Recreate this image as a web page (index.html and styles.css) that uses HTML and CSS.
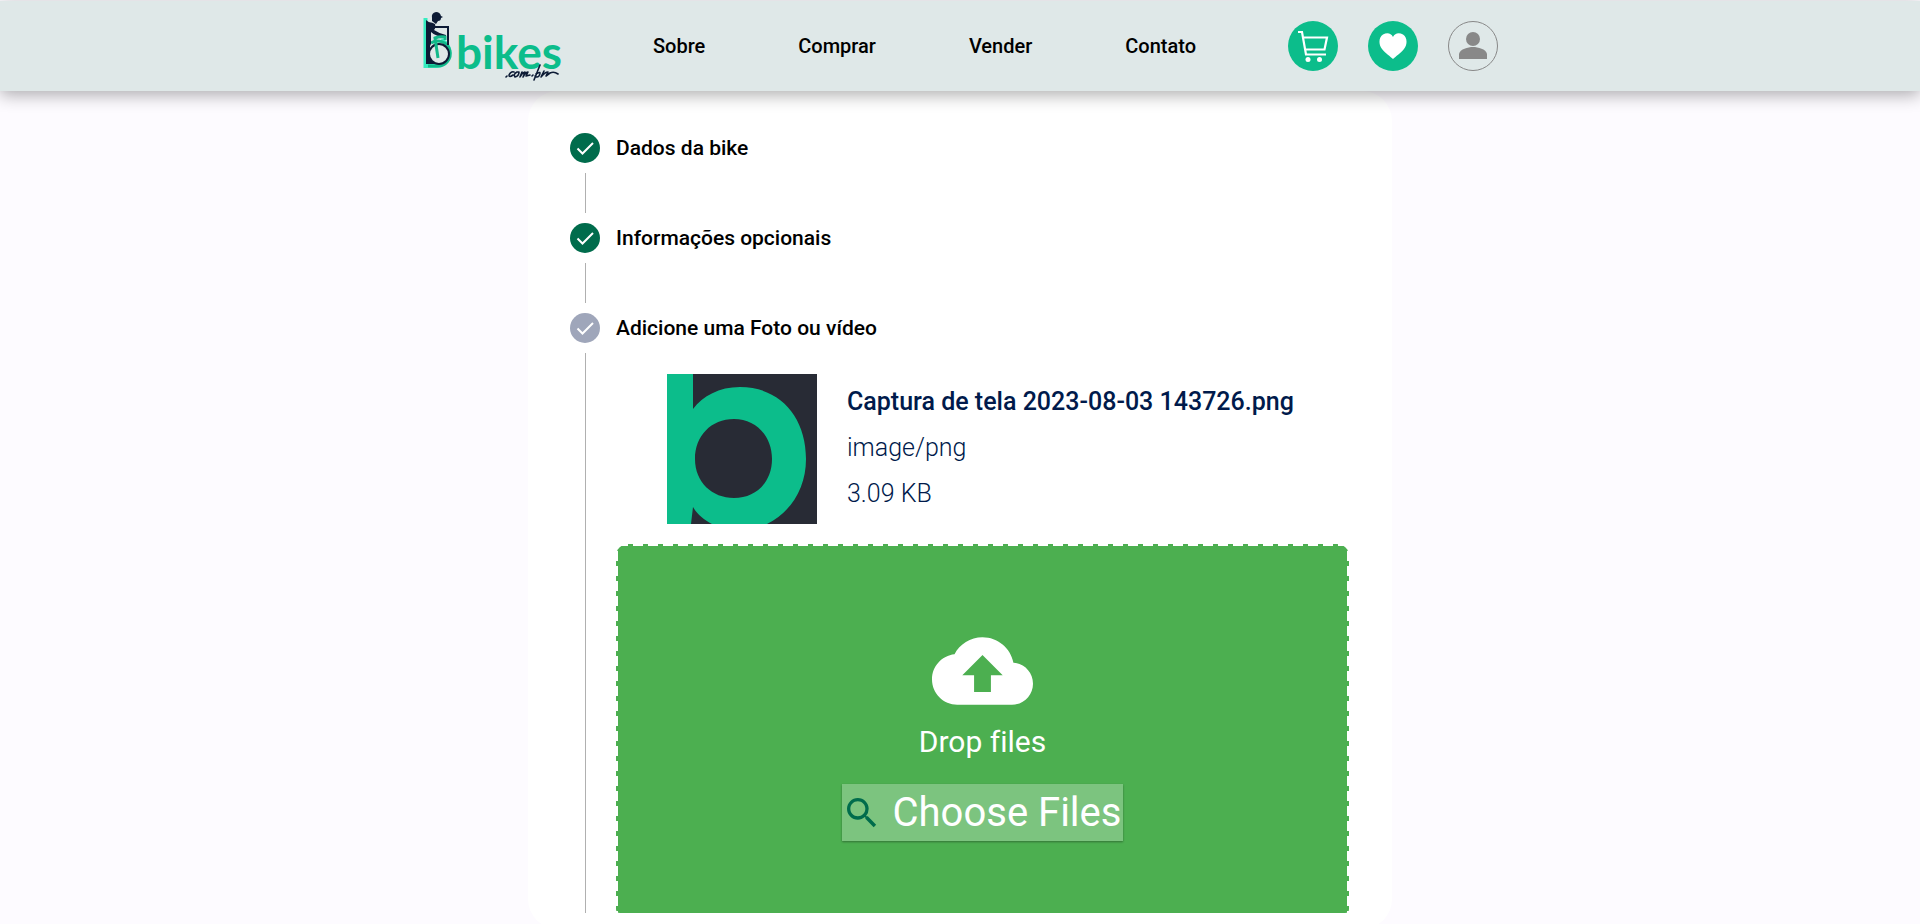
FILE: index.html
```html
<!DOCTYPE html>
<html lang="pt-BR">
<head>
<meta charset="utf-8">
<title>bbikes.com.br</title>
<link rel="stylesheet" href="styles.css">
</head>
<body>
<header class="topbar">
  <a class="logo" href="#" aria-label="bbikes.com.br">
    <svg class="logo-mark" viewBox="0 0 32 62" width="32" height="62" aria-hidden="true">
      <path d="M3.500 6V54H14A13.500 13.500 0 0 0 19 28" fill="none" stroke="#35edc0" stroke-width="4"/>
      <path d="M4 8L8 11V52H4Z" fill="#0d1b35"/>
      <path d="M6 54H15A12.500 12.500 0 1 0 9 31" fill="none" stroke="#12b98a" stroke-width="3"/>
      <path d="M5 38V52H16Z" fill="#0d1b35"/>
      <circle cx="17" cy="42" r="10" fill="#dfe8e8" stroke="#0d1b35" stroke-width="2"/>
      <path d="M9 15H26V33" fill="none" stroke="#0d1b35" stroke-width="2"/>
      <path d="M5 11Q8 9 13 12Q14 16 12 18Q18 22 24 23V25Q14 25 9 20V32L5 40Z" fill="#0d1b35"/>
      <path d="M10 6Q9 1 14 0Q18 0 19 4L21 5L19 6Q19 9 16 9L14 12L10 9Z" fill="#0d1b35"/>
      <path d="M16 46L13 26Q18 24 23 25V28" fill="none" stroke="#12b98a" stroke-width="3"/>
    </svg>
    <span class="logo-text">bikes<svg class="logo-sub" viewBox="0 0 56 18" width="56" height="18" aria-hidden="true"><path d="M2 13L3 12M10 8Q7 7 5 11Q5 14 9 11M13 8Q9 10 11 13Q15 12 15 8L13 8M18 8L16 13Q18 9 21 8L19 13Q22 8 24 8L22 12L26 11M28 12L29 11M36 1L30 16M32 10Q38 6 35 12Q33 14 31 12M40 7L37 13Q41 8 44 8L42 12L46 9Q50 7 54 10" fill="none" stroke="#0d1b35" stroke-width="1.600" stroke-linecap="round" stroke-linejoin="round"/></svg></span>
  </a>
  <nav class="nav">
    <a href="#">Sobre</a>
    <a href="#">Comprar</a>
    <a href="#">Vender</a>
    <a href="#">Contato</a>
  </nav>
  <div class="actions">
    <button class="round" type="button" aria-label="Carrinho">
      <svg viewBox="0 0 32 32" width="32" height="32"><path d="M1 2H5L9 24.500H29M7 7.500H30L27.500 19.500H8.500" fill="none" stroke="#fff" stroke-width="2.200"/><circle cx="11" cy="29.500" r="2.500" fill="#fff"/><circle cx="22.500" cy="29.500" r="2.500" fill="#fff"/></svg>
    </button>
    <button class="round" type="button" aria-label="Favoritos">
      <svg viewBox="0 0 28 26" width="28" height="26"><path d="M14 26C11 23 7 21 3 16C-1 11 0 4 4 1.500C8 -.5 12 0 14 4C16 0 20 -.5 24 1.500C28 4 29 11 25 16C21 21 17 23 14 26Z" fill="#fff"/></svg>
    </button>
    <button class="round user" type="button" aria-label="Conta">
      <svg viewBox="0 0 28 28" width="28" height="28"><circle cx="14" cy="7" r="7" fill="#888"/><path d="M0 27V22C1 17 9 15 14 15S27 17 28 22V27Z" fill="#888"/></svg>
    </button>
  </div>
</header>
<main class="card">
  <ol class="steps">
    <li class="step">
      <svg class="badge" viewBox="0 0 30 30" aria-hidden="true"><circle cx="15" cy="15" r="15"/><path d="M7.500 15.500L12.500 20.500L23 10"/></svg>
      <h2>Dados da bike</h2>
      <span class="line"></span>
    </li>
    <li class="step">
      <svg class="badge" viewBox="0 0 30 30" aria-hidden="true"><circle cx="15" cy="15" r="15"/><path d="M7.500 15.500L12.500 20.500L23 10"/></svg>
      <h2>Informações opcionais</h2>
      <span class="line"></span>
    </li>
    <li class="step current">
      <svg class="badge" viewBox="0 0 30 30" aria-hidden="true"><circle cx="15" cy="15" r="15"/><path d="M7.500 15.500L12.500 20.500L23 10"/></svg>
      <h2>Adicione uma Foto ou vídeo</h2>
      <span class="line"></span>
      <div class="content">
        <div class="file">
          <svg class="thumb" viewBox="0 0 150 150" role="img" aria-label="Pré-visualização"><path fill="#282b35" d="M0 0H150V150H0Z"/><path fill="#0cbd8b" fill-rule="evenodd" d="M0 0H26V35C36 22 52 13 73 13C113 13 139 43 139 85C139 114 124 138 100 150H45C37 146 30 140 26 133L24 150H0ZM67 45C44 45 28 62 28 85C28 108 45 124 67 124C89 124 105 108 105 85C105 62 89 45 67 45Z"/></svg>
          <div class="info">
            <p class="name">Captura de tela 2023-08-03 143726.png</p>
            <p>image/png</p>
            <p>3.09 KB</p>
          </div>
        </div>
        <div class="drop">
          <svg viewBox="0 4 24 16" width="101" height="68" aria-hidden="true"><path fill="#fff" d="M19.350 10.040C18.670 6.590 15.640 4 12 4 9.110 4 6.600 5.640 5.350 8.040 2.340 8.360 0 10.910 0 14c0 3.310 2.690 6 6 6h13c2.760 0 5-2.240 5-5 0-2.640-2.050-4.780-4.650-4.960zM14 13v4h-4v-4H7.200L12 8.200 16.800 13z"/></svg>
          <span class="hint">Drop files</span>
          <button class="choose" type="button">
            <svg viewBox="3 3 18 18" width="30" height="30" aria-hidden="true"><path fill="#006c4c" d="M15.500 14h-.79l-.28-.27A6.471 6.471 0 0 0 16 9.500 6.500 6.500 0 1 0 9.500 16c1.610 0 3.090-.59 4.230-1.570l.27.28v.79l5 4.990L20.490 19l-4.990-5zm-6 0C7.010 14 5 11.990 5 9.500S7.010 5 9.500 5 14 7.010 14 9.500 11.990 14 9.500 14z"/></svg>
            Choose Files
          </button>
        </div>
      </div>
    </li>
  </ol>
</main>
</body>
</html>
```
FILE: styles.css
```css
* { box-sizing: border-box; }
body {
  margin: 0;
  min-height: 100vh;
  display: flex;
  flex-direction: column;
  overflow: hidden;
  background: #fdfbff;
  color: #000;
  font-family: Roboto, sans-serif;
}
h2, p, ol { margin: 0; padding: 0; }
button { font: inherit; border: 0; padding: 0; cursor: pointer; }

.topbar {
  position: relative;
  z-index: 1;
  display: flex;
  align-items: center;
  justify-content: center;
  height: 90px;
  margin-top: 1px;
  background: #dfe8e8;
  box-shadow: 0 4px 16px rgba(0, 0, 0, .32);
}
.logo {
  display: flex;
  width: 140px;
  height: 68px;
  text-decoration: none;
}
.logo-text {
  position: relative;
  margin: 16px 0 0 2px;
  color: #0cbd8b;
  font: 700 46px/48px Lato, sans-serif;
}
.logo-sub { position: absolute; right: 2px; bottom: -2px; }
.nav {
  display: flex;
  gap: 93px;
  margin-left: 91px;
}
.nav a {
  color: #000;
  font-size: 20px;
  font-weight: 500;
  line-height: 28px;
  text-decoration: none;
}
.actions {
  display: flex;
  gap: 30px;
  margin-left: 92px;
}
.round {
  display: grid;
  place-items: center;
  width: 50px;
  height: 50px;
  border-radius: 50%;
  background: #0cbd8b;
}
.user { background: none; border: 1px solid #888; }

.card {
  flex: none;
  width: 45%;
  margin: 0 auto;
  padding: 24px 43px 16px 42px;
  border-radius: 30px;
  background: #fff;
}
.steps { list-style: none; }
.step {
  display: grid;
  grid-template-columns: 30px 1fr;
  grid-template-rows: 66px auto;
  column-gap: 16px;
  align-items: center;
}
.step:not(.current) { grid-template-rows: 66px 24px; }
.badge { width: 30px; height: 30px; fill: #006c4c; }
.badge path { fill: none; stroke: #fff; stroke-width: 2; }
.current .badge { fill: #9fa6ba; }
.step h2 { font-size: 21px; font-weight: 500; line-height: 28px; }
.line {
  align-self: stretch;
  justify-self: center;
  width: 1px;
  margin: -8px 0;
  background: #b0b0b0;
}
.current .line { margin-bottom: 0; }
.content { padding-top: 13px; }
.file { display: flex; gap: 30px; padding: 0 51px 20px; }
.thumb { flex: none; width: 150px; height: 150px; }
.info { padding-top: 9px; color: #001a4b; font-size: 25px; line-height: 38px; }
.info p { margin-bottom: 8px; font-weight: 300; white-space: nowrap; }
.info .name { font-weight: 500; }
.drop {
  display: flex;
  flex-direction: column;
  align-items: center;
  height: 369px;
  padding-top: 93px;
  border-radius: 12px 12px 4px 4px;
  background:
    repeating-linear-gradient(90deg, #fff 0 10px, #4caf50 10px 15px) 2px 0 / 100% 2px no-repeat,
    repeating-linear-gradient(#fff 0 10px, #4caf50 10px 15px) 0 7px / 2px 100% no-repeat,
    repeating-linear-gradient(#fff 0 10px, #4caf50 10px 15px) 100% 7px / 2px 100% no-repeat,
    #4caf50;
  color: #fff;
}
.hint {
  margin-top: 15px;
  font-size: 30px;
  font-variant-ligatures: none;
  line-height: 44px;
}
.choose {
  display: flex;
  align-items: center;
  gap: 16px;
  height: 57px;
  margin-top: 20px;
  padding: 0 2px 0 5px;
  background: rgba(255, 255, 255, .27);
  box-shadow: 0 1px 2px rgba(0, 0, 0, .35);
  color: #fff;
  font-size: 40px;
}
```
